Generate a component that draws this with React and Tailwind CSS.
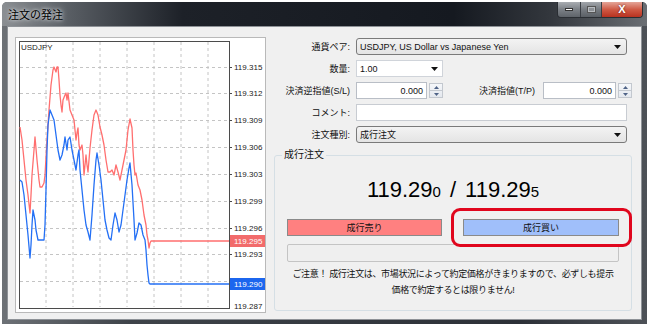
import React from 'react'

const RED = [
  [20,127],[22,140],[24,160],[26,180],[28,195],[30,213],[31,195],[32,175],[34,150],[35,137],[37,160],[39,180],[40,187],[42,187],[44,183],[45,175],
  [47,140],[49,110],[51,85],[53,70],[54,67],[56,72],[57,67],[58,67],[59,80],[60,95],[61,105],[62,112],[63,100],[65,95],[66,93],[67,100],[68,93],
  [70,110],[72,115],[74,120],[75,130],[76,140],[77,133],[78,128],[79,145],[80,150],[82,145],[83,155],[84,175],[85,165],[86,155],[87,165],[88,172],
  [90,148],[92,130],[94,115],[96,110],[98,115],[100,127],[102,135],[104,145],[106,160],[108,172],[110,172],[112,170],[114,175],[116,165],[118,172],
  [120,180],[122,170],[124,160],[126,150],[128,130],[130,119],[132,128],[133,150],[134,165],[135,175],[136,173],[138,185],[140,190],[142,200],
  [144,215],[146,225],[147,235],[148,240],[149,248],[150,243],[151,241],[229,241],
]

const BLUE = [
  [20,180],[22,182],[24,195],[26,215],[28,235],[30,258],[31,245],[32,225],[33,210],[35,220],[36,230],[38,240],[40,240],[42,240],[44,240],[45,225],
  [46,190],[47,150],[48,125],[50,110],[52,115],[54,120],[56,135],[58,150],[60,160],[62,155],[64,145],[65,137],[67,150],[68,140],[70,137],[72,150],
  [74,160],[76,170],[78,155],[79,150],[80,170],[82,190],[84,210],[86,225],[88,232],[90,240],[92,215],[94,185],[96,160],[97,153],[99,165],[101,180],
  [103,200],[105,220],[107,230],[109,238],[111,240],[113,225],[115,213],[117,220],[119,232],[121,225],[123,210],[125,195],[127,180],[129,168],
  [130,163],[132,185],[134,220],[135,240],[137,233],[139,223],[141,225],[143,235],[145,240],[146,250],[147,265],[148,275],[149,283],[150,284],[229,284],
]

// 119.290 is covered by the blue bid marker, so it is not drawn on the axis
const LEVELS = [
  ['119.315', 67], ['119.312', 93], ['119.309', 120], ['119.306', 147], ['119.303', 174],
  ['119.299', 201], ['119.296', 228], ['119.293', 254], ['119.287', 306],
]
const HGRID = [67, 93, 120, 147, 174, 201, 228, 254, 281]
const VGRID = [46, 73, 100, 127, 154, 181, 208]

const pts = a => a.map(p => p.join(',')).join(' ')

function Chart() {
  return (
    <div className="h-[276px] w-[251px] shrink-0 border border-[#b9b9b9] bg-white">
      <svg width="249" height="274" viewBox="16 38 249 274" className="block">
        {VGRID.map(x => (
          <line key={x} x1={x} y1="42" x2={x} y2="307" stroke="#c4c4c4" strokeDasharray="3 3" />
        ))}
        {HGRID.map(y => (
          <line key={y} x1="20" y1={y + 0.5} x2="229" y2={y + 0.5} stroke="#c4c4c4" strokeDasharray="3 3" />
        ))}
        <rect x="19.5" y="41.5" width="210" height="267" fill="none" stroke="#4b4b4b" />
        <polyline points={pts(RED)} fill="none" stroke="#ff6f6f" strokeWidth="1.3" strokeLinejoin="round" />
        <polyline points={pts(BLUE)} fill="none" stroke="#2470f5" strokeWidth="1.3" strokeLinejoin="round" />
        {HGRID.map(y => (
          <line key={y} x1="229" y1={y + 0.5} x2="232" y2={y + 0.5} stroke="#4b4b4b" />
        ))}
        {LEVELS.map(([t, y]) => (
          <text key={t} x="234" y={y + 3} fontSize="8" fill="#222" fontFamily="Liberation Sans, sans-serif">{t}</text>
        ))}
        <rect x="230" y="235" width="35" height="12" fill="#f26b6b" />
        <text x="234" y="244" fontSize="8" fill="#fff" fontFamily="Liberation Sans, sans-serif">119.295</text>
        <rect x="230" y="278" width="35" height="12" fill="#1c66ee" />
        <text x="234" y="287" fontSize="8" fill="#fff" fontFamily="Liberation Sans, sans-serif">119.290</text>
        <text x="21" y="50" fontSize="8" fill="#222" fontFamily="Liberation Sans, sans-serif">USDJPY</text>
      </svg>
    </div>
  )
}

function Arrow() {
  return (
    <svg width="7" height="4" viewBox="0 0 7 4" className="shrink-0">
      <path d="M0 0H7L3.5 4Z" fill="#111" />
    </svg>
  )
}

function Combo({ value, w }) {
  return (
    <div className={`flex h-[17px] ${w} items-center justify-between rounded-[3px] border border-[#7a7a7a] bg-[linear-gradient(#f3f3f3,#e4e4e4)] pl-[3px] pr-[5px]`}>
      <span>{value}</span>
      <Arrow />
    </div>
  )
}

function Spinner() {
  return (
    <div className="ml-[2px] flex h-[15px] w-[14px] flex-col border border-[#c3c8cf] bg-[linear-gradient(#f5f7fa,#e4e8ee)]">
      <div className="flex flex-1 items-center justify-center border-b border-[#c3c8cf]">
        <svg width="5" height="3" viewBox="0 0 5 3"><path d="M0 3H5L2.5 0Z" fill="#4f6387" /></svg>
      </div>
      <div className="flex flex-1 items-center justify-center">
        <svg width="5" height="3" viewBox="0 0 5 3"><path d="M0 0H5L2.5 3Z" fill="#4f6387" /></svg>
      </div>
    </div>
  )
}

function NumInput({ w }) {
  return (
    <div className="flex h-[17px] items-center">
      <div className={`flex h-[17px] ${w} items-center justify-end border border-[#b9bec6] bg-white pr-[3px]`}>0.000</div>
      <Spinner />
    </div>
  )
}

export default function App() {
  const font = "font-['Liberation_Sans','Noto_Sans_CJK_JP',sans-serif]"
  return (
    <div className={`h-[330px] w-[650px] overflow-hidden bg-white pl-[2px] pt-[2px] text-[9px] leading-[12px] text-[#111] ${font}`}>
      <div className="flex h-[322px] w-[645px] flex-col rounded-t-[5px] bg-[linear-gradient(90deg,#6d7176,#3e4349_20%,#2c3037_80%,#4d5157)]">
        <div className="flex h-[24px] shrink-0 items-start justify-between rounded-t-[5px] bg-[linear-gradient(90deg,#8b8f93_0%,#5a5f65_10%,#1d2128_28%,#151920_70%,#33373d_85%,#6a6e73_100%)]">
          <span className="ml-[6px] mt-[6px] text-[11px] leading-[14px] text-black [text-shadow:0_0_6px_#dfe3e6,0_0_3px_#dfe3e6]">注文の発注</span>
          <div className="mr-[4px] flex h-[16px] overflow-hidden rounded-b-[4px] border border-t-0 border-[#2a2e33]">
            <div className="flex w-[23px] items-center justify-center border-r border-[#3a3e44] bg-[linear-gradient(#a9adb2,#7b8086_50%,#5f646a)]">
              <div className="h-[3px] w-[8px] border border-[#333] bg-white" />
            </div>
            <div className="flex w-[21px] items-center justify-center border-r border-[#3a3e44] bg-[linear-gradient(#a2a6ab,#767b81_50%,#5a5f65)]">
              <div className="h-[7px] w-[9px] border border-[#555] bg-[#8d9196] shadow-[inset_0_0_0_1px_#b8bcc0]" />
            </div>
            <div className="flex w-[40px] items-center justify-center bg-[linear-gradient(#e4a598,#cf5a45_50%,#b83220)]">
              <span className="text-[11px] font-bold leading-none text-white [text-shadow:0_0_2px_#5a1208]">X</span>
            </div>
          </div>
        </div>
        <div className="mx-[5px] mb-[4px] flex flex-1 border border-[#8e9297] bg-[#f0f0f0]">
          <div className="ml-[7px] mt-[10px]">
            <Chart />
          </div>
          <div className="ml-[8px] mt-[11px] flex w-[358px] flex-col">
            <div className="flex flex-col gap-[5px]">
              <div className="flex items-center">
                <span className="w-[76px] text-right">通貨ペア:</span>
                <div className="ml-[6px]"><Combo value="USDJPY, US Dollar vs Japanese Yen" w="w-[271px]" /></div>
              </div>
              <div className="flex items-center">
                <span className="w-[76px] text-right">数量:</span>
                <div className="ml-[6px] flex h-[17px] w-[87px] items-center justify-between border border-[#d0d4da] bg-white pl-[3px] pr-[4px]">
                  <span>1.00</span>
                  <Arrow />
                </div>
              </div>
              <div className="flex items-center">
                <span className="w-[76px] text-right">決済逆指値(S/L)</span>
                <div className="ml-[6px]"><NumInput w="w-[71px]" /></div>
                <span className="flex-1 pr-[8px] text-right">決済指値(T/P)</span>
                <NumInput w="w-[73px]" />
              </div>
              <div className="flex items-center">
                <span className="w-[76px] text-right">コメント:</span>
                <div className="ml-[6px] h-[17px] w-[271px] border border-[#c8ccd2] bg-white" />
              </div>
              <div className="flex items-center">
                <span className="w-[76px] text-right">注文種別:</span>
                <div className="ml-[6px]"><Combo value="成行注文" w="w-[271px]" /></div>
              </div>
            </div>
            <fieldset className="mt-[6px] h-[162px] rounded-[3px] border border-[#d5dfe5] px-[12px]">
              <legend className="ml-[-5px] px-[2px] text-[10px] leading-[12px]">成行注文</legend>
              <div className="mt-[16px] flex items-baseline justify-center text-[22px] leading-[26px] text-black">
                <span>119.29</span><span className="text-[15px]">0</span>
                <span className="px-[9px]">/</span>
                <span>119.29</span><span className="text-[15px]">5</span>
              </div>
              <div className="relative mt-[14px] flex justify-between">
                <div className="flex h-[17px] w-[155px] items-center justify-center border border-[#8a8a8a] bg-[#ff8080]">成行売り</div>
                <div className="flex h-[17px] w-[156px] items-center justify-center border border-[#8a8a8a] bg-[#a0bffa]">成行買い</div>
                <div className="absolute left-[164px] top-[-11px] h-[39px] w-[181px] rounded-[9px] border-[3px] border-[#e0061d]" />
              </div>
              <div className="mt-[8px] h-[18px] rounded-[2px] border border-[#c4c4c4] bg-[#efefef]" />
              <div className="mt-[4px] flex flex-col items-center whitespace-nowrap leading-[16px] tracking-[-0.35px]">
                <span>ご注意！ 成行注文は、市場状況によって約定価格がきまりますので、必ずしも提示</span>
                <span>価格で約定するとは限りません!</span>
              </div>
            </fieldset>
          </div>
        </div>
      </div>
    </div>
  )
}
